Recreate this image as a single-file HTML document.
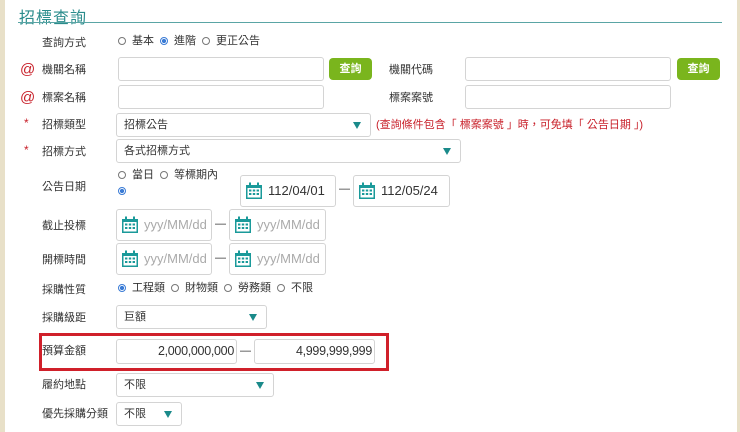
<!DOCTYPE html>
<html><head><meta charset="utf-8"><style>
*{box-sizing:border-box;margin:0;padding:0}
body{width:740px;height:432px;overflow:hidden;background:#e8e0c8;font-family:"Liberation Sans","Noto Sans CJK TC",sans-serif;font-size:11px;color:#333}
#m{position:absolute;left:5px;top:0;width:732px;height:432px;background:#fff}
.a{position:absolute}
.t{position:absolute;left:19px;top:3px;font-size:16px;color:#2a8c8c;letter-spacing:1px}
.ln{position:absolute;left:18px;top:22px;width:704px;height:1px;background:#5aa5a5}
.lb{position:absolute;left:42px;font-size:11px;color:#333;line-height:14px}
.in{position:absolute;border:1px solid #d4d4d4;border-radius:3px;background:#fff;height:24px}
.btn{position:absolute;background:#7ab51d;color:#fff;border-radius:4px;width:43px;height:22px;text-align:center;line-height:22px;font-size:11px;font-weight:bold}
.at{position:absolute;left:20px;color:#c8202a;font-size:15px;line-height:15px}
.st{position:absolute;left:24px;color:#c8202a;font-size:12px}
.sel{position:absolute;border:1px solid #d4d4d4;border-radius:3px;height:24px;padding-left:7px;line-height:22px;font-size:11px}
.sel:after{content:"";position:absolute;right:9px;top:8px;border-left:4px solid transparent;border-right:4px solid transparent;border-top:7px solid #1a8a8a}
.r{display:inline-block;width:8px;height:8px;border:1px solid #777;border-radius:50%;vertical-align:-1px;margin:0 6px 0 0}
.r.on{border-color:#3a7bd5;background:radial-gradient(circle,#3a7bd5 45%,#fff 55%)}
.rw{position:absolute;left:118px;font-size:11px;line-height:14px}
.rw span{margin-right:6px}
.dt{position:absolute;border:1px solid #d4d4d4;border-radius:3px;height:32px;width:96px;font-size:13px;line-height:30px;padding-left:27px;color:#333}
.dt.ph{color:#aaa}
.dt svg{position:absolute;left:4px;top:6px}
.ds{position:absolute;font-size:11px;color:#333}
.num{position:absolute;border:1px solid #d4d4d4;border-radius:3px;height:25px;text-align:right;padding-right:2px;line-height:23px;font-size:12.5px;letter-spacing:-0.3px}
</style></head><body><div id="m">
<div class="t" style="left:14px;top:4px">招標查詢</div>
<div class="ln" style="left:13px"></div>
</div>
<svg width="0" height="0" style="position:absolute"><defs><symbol id="cal" viewBox="0 0 18 18"><rect x="1" y="3" width="16" height="14" fill="#1a9a9a"/><rect x="4" y="0.5" width="2" height="4" fill="#1a9a9a"/><rect x="12" y="0.5" width="2" height="4" fill="#1a9a9a"/><rect x="2.5" y="6" width="13" height="9.5" fill="#fff"/><g fill="#1a9a9a"><rect x="4" y="7.5" width="2.4" height="2"/><rect x="7.8" y="7.5" width="2.4" height="2"/><rect x="11.6" y="7.5" width="2.4" height="2"/><rect x="4" y="11" width="2.4" height="2"/><rect x="7.8" y="11" width="2.4" height="2"/><rect x="11.6" y="11" width="2.4" height="2"/></g></symbol></defs></svg>

<div class="lb" style="top:36px">查詢方式</div>
<div class="rw" style="top:34px"><i class="r"></i><span>基本</span><i class="r on"></i><span>進階</span><i class="r"></i><span>更正公告</span></div>

<div class="at" style="top:62px">@</div>
<div class="lb" style="top:63px">機關名稱</div>
<div class="in" style="left:118px;top:57px;width:206px"></div>
<div class="btn" style="left:329px;top:58px">查詢</div>
<div class="lb" style="left:389px;top:63px">機關代碼</div>
<div class="in" style="left:465px;top:57px;width:206px"></div>
<div class="btn" style="left:677px;top:58px">查詢</div>

<div class="at" style="top:90px">@</div>
<div class="lb" style="top:91px">標案名稱</div>
<div class="in" style="left:118px;top:85px;width:206px"></div>
<div class="lb" style="left:389px;top:91px">標案案號</div>
<div class="in" style="left:465px;top:85px;width:206px"></div>

<div class="st" style="top:116px">*</div>
<div class="lb" style="top:118px">招標類型</div>
<div class="sel" style="left:116px;top:113px;width:255px">招標公告</div>
<div class="a" style="left:376px;top:116px;color:#c8202a;font-size:11px">(查詢條件包含「 標案案號 」時，可免填「 公告日期 」)</div>

<div class="st" style="top:143px">*</div>
<div class="lb" style="top:145px">招標方式</div>
<div class="sel" style="left:116px;top:139px;width:345px">各式招標方式</div>

<div class="lb" style="top:180px">公告日期</div>
<div class="rw" style="top:168px"><i class="r"></i><span>當日</span><i class="r"></i><span>等標期內</span></div>
<div class="rw" style="top:184px"><i class="r on"></i></div>
<div class="dt" style="left:240px;top:175px;width:96px"><svg width="18" height="18"><use href="#cal"/></svg>112/04/01</div>
<div class="ds" style="left:339px;top:183px">—</div>
<div class="dt" style="left:353px;top:175px;width:97px"><svg width="18" height="18"><use href="#cal"/></svg>112/05/24</div>

<div class="lb" style="top:219px">截止投標</div>
<div class="dt ph" style="left:116px;top:209px"><svg width="18" height="18"><use href="#cal"/></svg>yyy/MM/dd</div>
<div class="ds" style="left:215px;top:218px">—</div>
<div class="dt ph" style="left:229px;top:209px;width:97px"><svg width="18" height="18"><use href="#cal"/></svg>yyy/MM/dd</div>

<div class="lb" style="top:253px">開標時間</div>
<div class="dt ph" style="left:116px;top:243px"><svg width="18" height="18"><use href="#cal"/></svg>yyy/MM/dd</div>
<div class="ds" style="left:215px;top:252px">—</div>
<div class="dt ph" style="left:229px;top:243px;width:97px"><svg width="18" height="18"><use href="#cal"/></svg>yyy/MM/dd</div>

<div class="lb" style="top:283px">採購性質</div>
<div class="rw" style="top:281px"><i class="r on"></i><span>工程類</span><i class="r"></i><span>財物類</span><i class="r"></i><span>勞務類</span><i class="r"></i><span>不限</span></div>

<div class="lb" style="top:311px">採購級距</div>
<div class="sel" style="left:116px;top:305px;width:151px">巨額</div>

<div class="a" style="left:39px;top:333px;width:350px;height:38px;border:3px solid #d0202a"></div>
<div class="lb" style="top:344px">預算金額</div>
<div class="num" style="left:116px;top:339px;width:121px">2,000,000,000</div>
<div class="ds" style="left:240px;top:345px">—</div>
<div class="num" style="left:254px;top:339px;width:121px">4,999,999,999</div>

<div class="lb" style="top:378px">履約地點</div>
<div class="sel" style="left:116px;top:373px;width:158px">不限</div>

<div class="lb" style="top:407px">優先採購分類</div>
<div class="sel" style="left:116px;top:402px;width:66px">不限</div>
</body></html>
